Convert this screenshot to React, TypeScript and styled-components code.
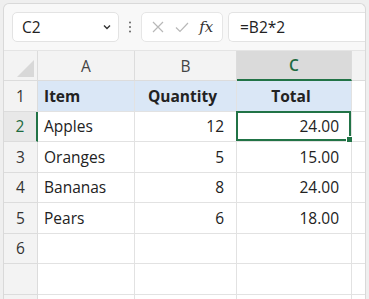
import React from "react";
import styled, { createGlobalStyle } from "styled-components";

const GlobalStyle = createGlobalStyle`
  html, body {
    margin: 0;
    padding: 0;
    background: #efefef;
    overflow: hidden;
  }
  * { box-sizing: border-box; }
`;

const Page = styled.div`
  width: 369px;
  height: 299px;
  padding: 3px 3px 0 3px;
  font-family: "Open Sans", "Noto Sans", sans-serif;
  color: #222;
`;

const Frame = styled.div`
  height: 100%;
  background: #f8f8f8;
  border: 1px solid #d9d9d9;
  border-bottom: none;
  border-radius: 6px 6px 0 0;
  overflow: hidden;
  display: flex;
  flex-direction: column;
`;

const Toolbar = styled.div`
  height: 46px;
  flex-shrink: 0;
  display: flex;
  align-items: center;
  padding: 0 0 0 8px;
`;

const NameBox = styled.div`
  width: 107px;
  height: 30px;
  background: #fff;
  border: 1px solid #e3e3e3;
  border-radius: 5px;
  display: flex;
  align-items: center;
  justify-content: space-between;
  padding: 0 6px 0 9px;
  font-size: 15.5px;
`;

const Dots = styled.div`
  width: 22px;
  display: flex;
  justify-content: center;
`;

const FxGroup = styled.div`
  width: 82px;
  height: 30px;
  background: #fff;
  border: 1px solid #e6e6e6;
  border-radius: 5px;
  display: flex;
  align-items: center;
  justify-content: space-around;
  padding: 0 4px;
`;

const FxText = styled.span`
  font-family: "DejaVu Serif", "Liberation Serif", serif;
  font-style: italic;
  font-size: 15px;
  color: #333;
`;

const Formula = styled.div`
  flex: 1;
  height: 30px;
  margin-left: 5px;
  background: #fff;
  border: 1px solid #e3e3e3;
  border-right: none;
  border-radius: 5px 0 0 5px;
  display: flex;
  align-items: center;
  padding-left: 11px;
  font-size: 15.5px;
`;

const Sheet = styled.div`
  flex: 1;
  min-height: 0;
  overflow: hidden;
  display: grid;
  grid-template-columns: 34px 97px 102px 115px 1fr;
  grid-template-rows: 30px;
  grid-auto-rows: 30.5px;
  background: #fff;
  border-top: 1px solid #e4e4e4;
`;

const Cell = styled.div<{
  $align?: "left" | "right" | "center";
  $bold?: boolean;
  $blue?: boolean;
}>`
  border-right: 1px solid #e2e2e2;
  border-bottom: 1px solid #e2e2e2;
  display: flex;
  align-items: center;
  justify-content: ${(p) =>
    p.$align === "right" ? "flex-end" : p.$align === "center" ? "center" : "flex-start"};
  padding: 0 12px 0 6px;
  font-size: 15.5px;
  font-weight: ${(p) => (p.$bold ? 700 : 400)};
  background: ${(p) => (p.$blue ? "#dae7f6" : "#fff")};
  white-space: nowrap;
  position: relative;
`;

const Corner = styled.div`
  background: #f3f3f3;
  border-right: 1px solid #dcdcdc;
  border-bottom: 1px solid #dcdcdc;
  position: relative;
  &::after {
    content: "";
    position: absolute;
    right: 3px;
    bottom: 3px;
    width: 0;
    height: 0;
    border-left: 17px solid transparent;
    border-bottom: 17px solid #d8d8d8;
  }
`;

const ColHead = styled.div<{ $active?: boolean }>`
  background: ${(p) => (p.$active ? "#dadada" : "#f3f3f3")};
  color: ${(p) => (p.$active ? "#1d6b40" : "#444")};
  font-weight: ${(p) => (p.$active ? 600 : 400)};
  border-right: 1px solid #dcdcdc;
  border-bottom: ${(p) => (p.$active ? "2px solid #217346" : "1px solid #dcdcdc")};
  display: flex;
  align-items: center;
  justify-content: center;
  font-size: 15.5px;
`;

const RowHead = styled.div<{ $active?: boolean }>`
  background: ${(p) => (p.$active ? "#e8e8e8" : "#f3f3f3")};
  color: ${(p) => (p.$active ? "#1d6b40" : "#333")};
  border-right: ${(p) => (p.$active ? "2px solid #217346" : "1px solid #dcdcdc")};
  border-bottom: 1px solid #dcdcdc;
  display: flex;
  align-items: center;
  justify-content: center;
  font-size: 15.5px;
`;

const Selection = styled.div`
  position: absolute;
  inset: -1px 0 0 -1px;
  border: 2px solid #217346;
  pointer-events: none;
  &::after {
    content: "";
    position: absolute;
    right: -5px;
    bottom: -5px;
    width: 6px;
    height: 6px;
    background: #217346;
    border: 1px solid #fff;
  }
`;

const rows: [string, string, string][] = [
  ["Apples", "12", "24.00"],
  ["Oranges", "5", "15.00"],
  ["Bananas", "8", "24.00"],
  ["Pears", "6", "18.00"],
];

const Chevron = () => (
  <svg width="10" height="10" viewBox="0 0 10 10">
    <path d="M2 3.5 L5 6.5 L8 3.5" fill="none" stroke="#333" strokeWidth="1.4" />
  </svg>
);

const Cross = () => (
  <svg width="14" height="14" viewBox="0 0 14 14">
    <path d="M2 2 L12 12 M12 2 L2 12" stroke="#b8b8b8" strokeWidth="1.2" />
  </svg>
);

const Check = () => (
  <svg width="16" height="14" viewBox="0 0 16 14">
    <path d="M2 7.5 L6 11.5 L14 3" fill="none" stroke="#b8b8b8" strokeWidth="1.2" />
  </svg>
);

export default function App() {
  return (
    <Page>
      <GlobalStyle />
      <Frame>
        <Toolbar>
          <NameBox>
            <span>C2</span>
            <Chevron />
          </NameBox>
          <Dots>
            <svg width="4" height="14" viewBox="0 0 4 14">
              <circle cx="2" cy="2.5" r="1" fill="#666" />
              <circle cx="2" cy="7" r="1" fill="#666" />
              <circle cx="2" cy="11.5" r="1" fill="#666" />
            </svg>
          </Dots>
          <FxGroup>
            <Cross />
            <Check />
            <FxText>fx</FxText>
          </FxGroup>
          <Formula>=B2*2</Formula>
        </Toolbar>
        <Sheet>
          <Corner />
          <ColHead>A</ColHead>
          <ColHead>B</ColHead>
          <ColHead $active>C</ColHead>
          <ColHead />

          <RowHead>1</RowHead>
          <Cell $bold $blue>Item</Cell>
          <Cell $bold $blue $align="center">Quantity</Cell>
          <Cell $bold $blue $align="center">Total</Cell>
          <Cell />

          {rows.map(([item, qty, total], i) => (
            <React.Fragment key={item}>
              <RowHead $active={i === 0}>{i + 2}</RowHead>
              <Cell>{item}</Cell>
              <Cell $align="right">{qty}</Cell>
              <Cell $align="right">
                {total}
                {i === 0 && <Selection />}
              </Cell>
              <Cell />
            </React.Fragment>
          ))}

          {[6, 7, 8].map((n) => (
            <React.Fragment key={n}>
              <RowHead>{n === 6 ? "6" : ""}</RowHead>
              <Cell />
              <Cell />
              <Cell />
              <Cell />
            </React.Fragment>
          ))}
        </Sheet>
      </Frame>
    </Page>
  );
}
